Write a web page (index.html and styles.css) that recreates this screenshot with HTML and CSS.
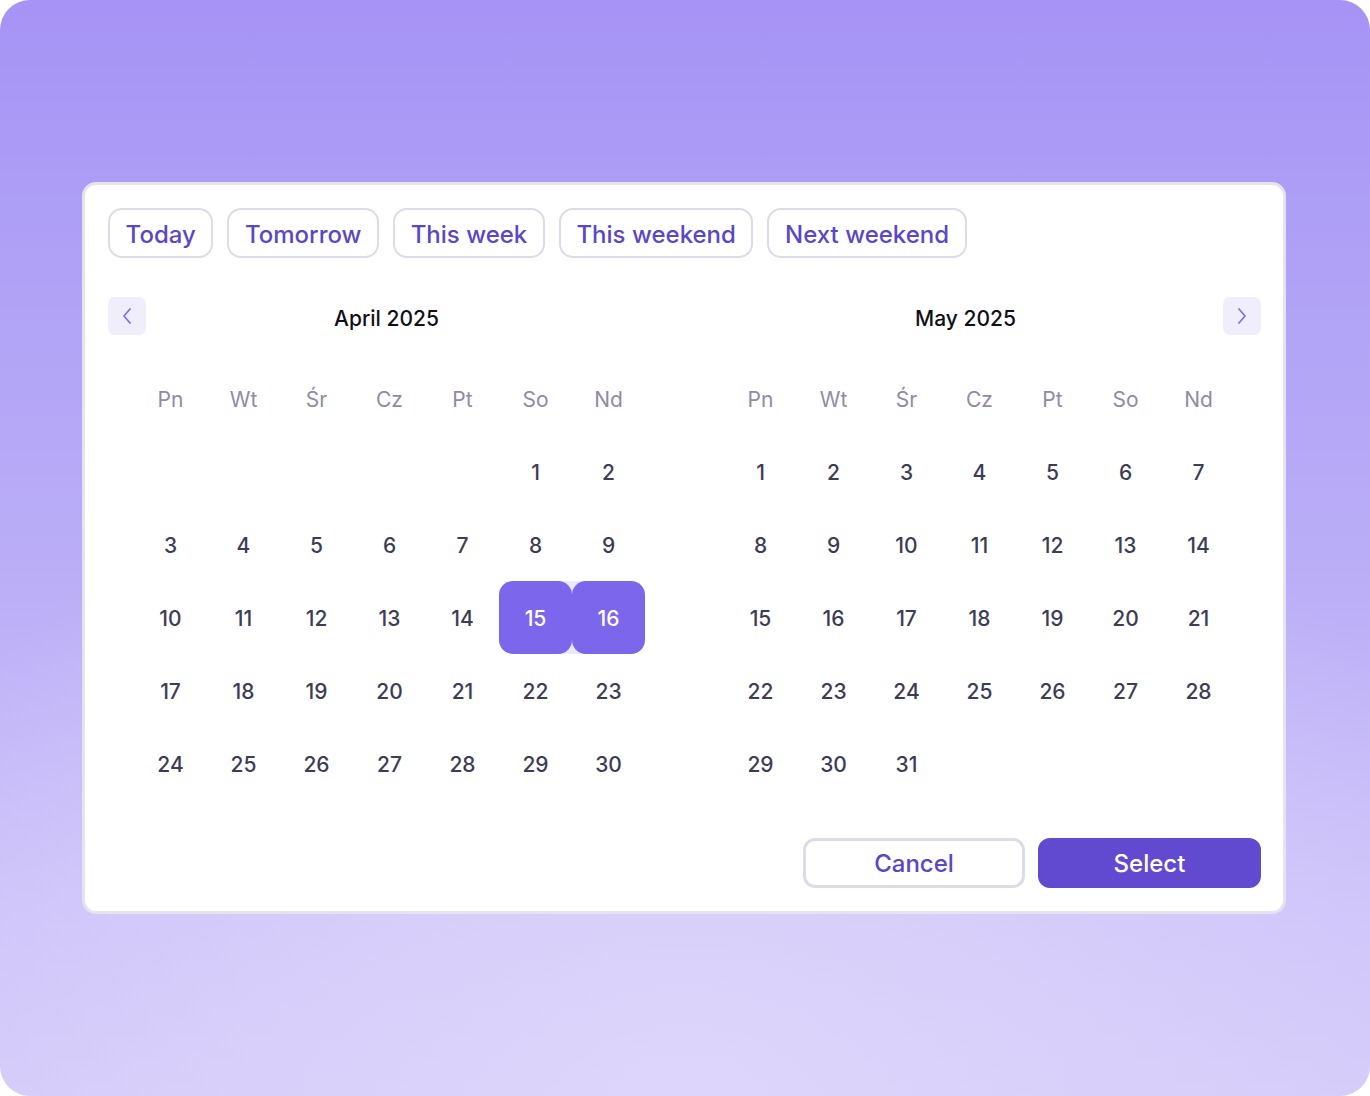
FILE: index.html
```html
<!DOCTYPE html>
<html lang="pl">
<head>
<meta charset="utf-8">
<title>Date picker</title>
<link rel="stylesheet" href="styles.css">
</head>
<body>
<div class="page">
  <div class="card">
    <div class="chips">
      <button class="chip">Today</button>
      <button class="chip">Tomorrow</button>
      <button class="chip">This week</button>
      <button class="chip">This weekend</button>
      <button class="chip">Next weekend</button>
    </div>
    <div class="months">
      <div class="month">
        <div class="month-head">
          <button class="nav" aria-label="Previous month">
            <svg width="14" height="18" viewBox="0 0 14 18"><path d="M10 2 L4 9 L10 16" fill="none" stroke="#7e6ee6" stroke-width="1.7" stroke-linecap="round" stroke-linejoin="round"/></svg>
          </button>
          <div class="title">April 2025</div>
          <div></div>
        </div>
        <div class="grid">
          <div class="wd">Pn</div><div class="wd">Wt</div><div class="wd">Śr</div><div class="wd">Cz</div><div class="wd">Pt</div><div class="wd">So</div><div class="wd">Nd</div>
          <div></div><div></div><div></div><div></div><div></div>
          <div class="day">1</div><div class="day">2</div>
          <div class="day">3</div><div class="day">4</div><div class="day">5</div><div class="day">6</div><div class="day">7</div><div class="day">8</div><div class="day">9</div>
          <div class="day">10</div><div class="day">11</div><div class="day">12</div><div class="day">13</div><div class="day">14</div>
          <div class="day sel start"><span>15</span></div><div class="day sel end"><span>16</span></div>
          <div class="day">17</div><div class="day">18</div><div class="day">19</div><div class="day">20</div><div class="day">21</div><div class="day">22</div><div class="day">23</div>
          <div class="day">24</div><div class="day">25</div><div class="day">26</div><div class="day">27</div><div class="day">28</div><div class="day">29</div><div class="day">30</div>
        </div>
      </div>
      <div class="month">
        <div class="month-head">
          <div></div>
          <div class="title title-right">May 2025</div>
          <button class="nav" aria-label="Next month">
            <svg width="14" height="18" viewBox="0 0 14 18"><path d="M4 2 L10 9 L4 16" fill="none" stroke="#7e6ee6" stroke-width="1.7" stroke-linecap="round" stroke-linejoin="round"/></svg>
          </button>
        </div>
        <div class="grid">
          <div class="wd">Pn</div><div class="wd">Wt</div><div class="wd">Śr</div><div class="wd">Cz</div><div class="wd">Pt</div><div class="wd">So</div><div class="wd">Nd</div>
          <div class="day">1</div><div class="day">2</div><div class="day">3</div><div class="day">4</div><div class="day">5</div><div class="day">6</div><div class="day">7</div>
          <div class="day">8</div><div class="day">9</div><div class="day">10</div><div class="day">11</div><div class="day">12</div><div class="day">13</div><div class="day">14</div>
          <div class="day">15</div><div class="day">16</div><div class="day">17</div><div class="day">18</div><div class="day">19</div><div class="day">20</div><div class="day">21</div>
          <div class="day">22</div><div class="day">23</div><div class="day">24</div><div class="day">25</div><div class="day">26</div><div class="day">27</div><div class="day">28</div>
          <div class="day">29</div><div class="day">30</div><div class="day">31</div>
        </div>
      </div>
    </div>
    <div class="footer">
      <button class="btn btn-cancel">Cancel</button>
      <button class="btn btn-select">Select</button>
    </div>
  </div>
</div>
</body>
</html>
```

FILE: styles.css
```css
* { box-sizing: border-box; }
html, body { margin: 0; padding: 0; background: #ffffff; }
body { font-family: Inter, "Noto Sans", "Liberation Sans", sans-serif; }

.page {
  width: 1370px;
  height: 1096px;
  border-radius: 30px;
  overflow: hidden;
  background:
    radial-gradient(ellipse 70% 60% at 50% 100%, rgba(222, 214, 251, 0.95) 0%, rgba(222, 214, 251, 0) 100%),
    linear-gradient(180deg, #a693f5 0%, #ae9ff6 20%, #bcaff7 55%, #cbc0f9 80%, #d3c9fa 100%);
  padding: 182px 84px 0 82px;
}

.card {
  width: 1204px;
  height: 732px;
  background: #ffffff;
  border: 3px solid #e6e3f1;
  border-radius: 14px;
  padding: 23px 22px 23px 23px;
  display: flex;
  flex-direction: column;
}

button { font-family: inherit; cursor: pointer; }

.chips { display: flex; gap: 14px; }
.chip {
  height: 50px;
  padding: 2px 15.6px 0;
  background: #ffffff;
  border: 2.5px solid #dedbe9;
  border-radius: 14px;
  color: #5a47c7;
  font-size: 24px;
  font-weight: 500;
}

.months {
  display: flex;
  gap: 27px;
  margin-top: 39px;
}
.month { width: 563px; }
.month-head {
  display: grid;
  grid-template-columns: 38px 1fr 38px;
  align-items: center;
  height: 38px;
}
.nav {
  width: 38px;
  height: 38px;
  border: none;
  border-radius: 7px;
  background: #f0eefd;
  display: flex;
  align-items: center;
  justify-content: center;
  padding: 0;
}
.title {
  text-align: center;
  font-size: 21px;
  font-weight: 500;
  color: #111018;
  padding: 4px 6px 0 0;
}
.title-right { padding-right: 28px; }

.grid {
  margin: 27px 0 0 26px;
  display: grid;
  grid-template-columns: repeat(7, 73px);
  grid-auto-rows: 73px;
}
.wd, .day {
  display: flex;
  align-items: center;
  justify-content: center;
  font-size: 21px;
  padding-top: 2px;
}
.wd { color: #8e8ba4; font-weight: 400; }
.day { color: #3e3c55; font-weight: 500; }

.sel { padding-top: 0; }
.sel.start { background: linear-gradient(90deg, transparent 50%, #ece8fd 50%); }
.sel.end { background: linear-gradient(90deg, #ece8fd 50%, transparent 50%); }
.sel span {
  width: 73px;
  height: 73px;
  border-radius: 14px;
  background: #7c66ec;
  color: #ffffff;
  display: flex;
  align-items: center;
  justify-content: center;
  padding-top: 2px;
}

.footer {
  margin-top: auto;
  display: flex;
  justify-content: flex-end;
  gap: 13px;
}
.btn {
  height: 50px;
  border-radius: 12px;
  font-size: 24px;
  font-weight: 500;
}
.btn-cancel {
  width: 222px;
  background: #ffffff;
  border: 3px solid #dedbe9;
  color: #5a47c7;
  padding-top: 2px;
}
.btn-select {
  width: 223px;
  background: #6149d0;
  border: none;
  color: #ffffff;
}
```
